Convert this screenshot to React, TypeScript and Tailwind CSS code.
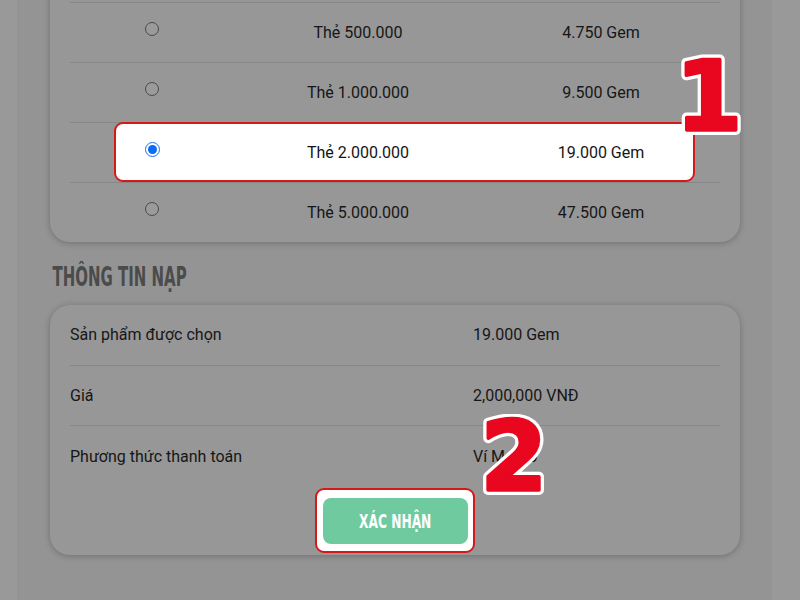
const packages = [
    { id: 0, name: 'Thẻ 200.000', gem: '1.900 Gem' },
    { id: 1, name: 'Thẻ 500.000', gem: '4.750 Gem' },
    { id: 2, name: 'Thẻ 1.000.000', gem: '9.500 Gem' },
    { id: 3, name: 'Thẻ 2.000.000', gem: '19.000 Gem' },
    { id: 4, name: 'Thẻ 5.000.000', gem: '47.500 Gem' },
];

const info = [
    { label: 'Sản phẩm được chọn', value: '19.000 Gem' },
    { label: 'Giá', value: '2,000,000 VNĐ' },
    { label: 'Phương thức thanh toán', value: 'Ví MoMo' },
];

const condensed = "font-['DejaVu_Sans_Condensed','Liberation_Sans_Narrow',sans-serif] font-bold";

// big red step marker with white outline
const StepNumber = ({ n, className }: { n: string; className: string }) => (
    <svg className={className} viewBox="0 0 80 84" width="80" height="84">
        <text
            x="40" y="76" textAnchor="middle"
            fontFamily="'DejaVu Sans', sans-serif" fontWeight="900" fontSize="96"
            fill="#ffffff" stroke="#ffffff" strokeWidth="10" strokeLinejoin="round"
        >
            {n}
        </text>
        <text
            x="40" y="76" textAnchor="middle"
            fontFamily="'DejaVu Sans', sans-serif" fontWeight="900" fontSize="96"
            fill="#e8071f" stroke="#e8071f" strokeWidth="3.5" strokeLinejoin="round"
        >
            {n}
        </text>
    </svg>
);

const Radio = ({ checked }: { checked: boolean }) =>
    checked ? (
        <span className="w-[15px] h-[15px] rounded-full border-[1.5px] border-[#1a73f0] bg-white flex items-center justify-center">
            <span className="w-[9px] h-[9px] rounded-full bg-[#0a6cf5]" />
        </span>
    ) : (
        <span className="w-[14px] h-[14px] rounded-full border border-[#4a4a4a] bg-[#9a9a9a]" />
    );

export default function App() {
    const selected = 3;

    return (
        <div className="w-[800px] h-[600px] overflow-hidden bg-[#999999] flex font-['Roboto','Liberation_Sans',sans-serif]">
            <div className="relative ml-[17px] w-[755px] h-full bg-[#949494] pl-[33px] pr-[32px]">
                {/* package list */}
                <div className="mt-[-58px] bg-[#979797] rounded-[20px] shadow-[0_1px_6px_rgba(0,0,0,0.25)] px-[20px]">
                    {packages.map((p, i) => (
                        <div
                            key={p.id}
                            className={`relative h-[60px] grid grid-cols-[164px_248px_1fr] items-center text-[16px] ${i > 0 ? 'border-t border-[#878787]' : ''}`}
                        >
                            {p.id === selected && (
                                <div className="absolute left-[44px] right-[25px] top-[-1px] bottom-0 bg-white border-2 border-[#d51818] rounded-[9px]" />
                            )}
                            <div className="relative flex justify-center -mt-[7px]">
                                <Radio checked={p.id === selected} />
                            </div>
                            <div className="relative text-center text-[#161616]">{p.name}</div>
                            <div className="relative text-center text-[#161616]">{p.gem}</div>
                        </div>
                    ))}
                </div>

                <h2 className={`${condensed} mt-[22px] text-[26px] leading-[26px] text-[#4b4b4b] pl-[4px] scale-x-[0.64] origin-left`}>
                    THÔNG TIN NẠP
                </h2>

                {/* summary */}
                <div className="mt-[15px] bg-[#979797] rounded-[20px] shadow-[0_1px_6px_rgba(0,0,0,0.25)] px-[20px]">
                    {info.map((row, i) => (
                        <div
                            key={row.label}
                            className={`h-[60px] grid grid-cols-[403px_1fr] items-center text-[16px] text-[#161616] ${i > 0 ? 'border-t border-[#878787]' : ''}`}
                        >
                            <div className={i === 2 ? 'mt-[2px]' : ''}>{row.label}</div>
                            <div className={i === 2 ? 'mt-[2px]' : ''}>{row.value}</div>
                        </div>
                    ))}
                    <div className="h-[70px] flex justify-center pt-[3px]">
                        <div className="w-[160px] h-[65px] bg-white border-2 border-[#d51818] rounded-[9px] flex items-center justify-center">
                            <button className={`${condensed} w-[145px] h-[46px] rounded-[8px] bg-[#6fcb9f] text-white text-[20px] mt-[1px]`}>
                                <span className="inline-block scale-x-[0.68]">XÁC NHẬN</span>
                            </button>
                        </div>
                    </div>
                </div>

                <StepNumber n="1" className="absolute left-[652px] top-[54px]" />
                <StepNumber n="2" className="absolute left-[457px] top-[414px]" />
            </div>
        </div>
    );
}
